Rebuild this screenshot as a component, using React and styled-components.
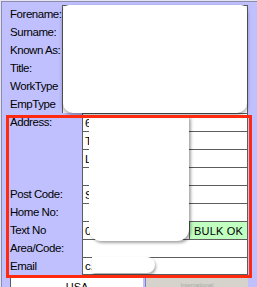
import React from 'react';
import styled, { createGlobalStyle } from 'styled-components';

const Global = createGlobalStyle`
  html, body { margin: 0; padding: 0; background: #c0c0ff; overflow: hidden; }
  body { font-family: "Liberation Sans", Arial, sans-serif; }
`;

const Window = styled.div`
  position: relative;
  width: 257px;
  height: 287px;
  overflow: hidden;
  box-sizing: border-box;
  border-top: 1px solid #e4e4f6;
  border-left: 1px solid #e4e4f6;
  background: #c0c0ff;
`;

const Inner = styled.div`
  box-sizing: border-box;
  height: 100%;
  border-top: 1px solid #8c8ca8;
  border-left: 1px solid #8c8ca8;
  padding: 3px 9px 0 1px;
`;

const Section = styled.div`
  display: grid;
  grid-template-columns: ${p => p.$label}px ${p => 245 - p.$label}px;
  grid-auto-rows: 18px;
`;

const Label = styled.div`
  grid-row: span ${p => p.$span || 1};
  display: flex;
  align-items: ${p => (p.$top ? 'flex-start' : 'center')};
  padding: ${p => (p.$top ? '3px' : '0')} 0 0 7px;
  font-size: 11.5px;
  letter-spacing: -0.45px;
  color: #000;
  white-space: nowrap;
`;

const Field = styled.div`
  box-sizing: border-box;
  display: flex;
  align-items: center;
  background: #fff;
  border-top: 1px solid #5c5c5c;
  border-left: 1px solid #5c5c5c;
  border-right: 1px solid #5c5c5c;
  border-bottom: ${p => (p.$last ? '1px solid #5c5c5c' : 'none')};
  padding-left: 2px;
  font-size: 11.5px;
  color: #000;
`;

const FieldText = styled.span`
  flex: 1;
`;

const BulkButton = styled.div`
  box-sizing: border-box;
  width: 58px;
  height: 17px;
  align-self: flex-start;
  display: flex;
  align-items: center;
  justify-content: center;
  background: #c0ffc0;
  border-left: 1px solid #5c5c5c;
  font-size: 11px;
  letter-spacing: 0.2px;
  color: #000;
`;

const BottomRow = styled.div`
  display: flex;
  gap: 2px;
  margin-top: 2px;
  padding-left: 7px;
  height: 14px;
`;

const CountryBox = styled.div`
  box-sizing: border-box;
  width: 133px;
  background: #fff;
  border-top: 1px solid #5c5c5c;
  border-left: 1px solid #5c5c5c;
  text-align: center;
  font-size: 11px;
  line-height: 12px;
  padding-top: 3px;
  color: #000;
`;

const GreyButton = styled.div`
  box-sizing: border-box;
  flex: 1;
  background: #d6d3cc;
  border-top: 1px solid #f0f0f0;
  border-left: 1px solid #8080c0;
  text-align: center;
  font-size: 6px;
  line-height: 7px;
  color: #a8a8a8;
  padding-top: 4px;
`;

const Blob = styled.div`
  position: absolute;
  background: #fff;
  left: ${p => p.$x}px;
  top: ${p => p.$y}px;
  width: ${p => p.$w}px;
  height: ${p => p.$h}px;
  border-radius: ${p => p.$r};
  box-shadow: ${p => p.$s};
`;

const Highlight = styled.div`
  position: absolute;
  box-sizing: border-box;
  left: 5px;
  top: 114px;
  width: 246px;
  height: 163px;
  border: 3px solid #ff2a10;
`;

const topRows = ['Forename:', 'Surname:', 'Known As:', 'Title:', 'WorkType', 'EmpType'];

export default function App() {
  return (
    <>
      <Global />
      <Window>
        <Inner>
          <Section $label={59}>
            {topRows.map(l => (
              <React.Fragment key={l}>
                <Label>{l}</Label>
                <Field />
              </React.Fragment>
            ))}
          </Section>
          <Section $label={79}>
            <Label $span={4} $top>Address:</Label>
            <Field><FieldText>6</FieldText></Field>
            <Field><FieldText>T</FieldText></Field>
            <Field><FieldText>L</FieldText></Field>
            <Field />
            <Label>Post Code:</Label>
            <Field><FieldText>S</FieldText></Field>
            <Label>Home No:</Label>
            <Field />
            <Label>Text No</Label>
            <Field>
              <FieldText>0</FieldText>
              <BulkButton>BULK OK</BulkButton>
            </Field>
            <Label>Area/Code:</Label>
            <Field />
            <Label>Email</Label>
            <Field $last><FieldText>c.</FieldText></Field>
          </Section>
          <BottomRow>
            <CountryBox>USA</CountryBox>
            <GreyButton>International</GreyButton>
          </BottomRow>
        </Inner>
        <Blob $x={88} $y={115} $w={100} $h={125} $r="2px 2px 12px 12px" $s="2px 2px 3px rgba(0,0,0,0.35)" />
        <Blob $x={91} $y={256} $w={63} $h={16} $r="0 8px 8px 0" $s="1px 2px 3px rgba(0,0,0,0.35)" />
        <Blob $x={62} $y={4} $w={184} $h={108} $r="6px 6px 10px 10px" $s="0 2px 4px rgba(0,0,0,0.4)" />
        <Highlight />
      </Window>
    </>
  );
}
